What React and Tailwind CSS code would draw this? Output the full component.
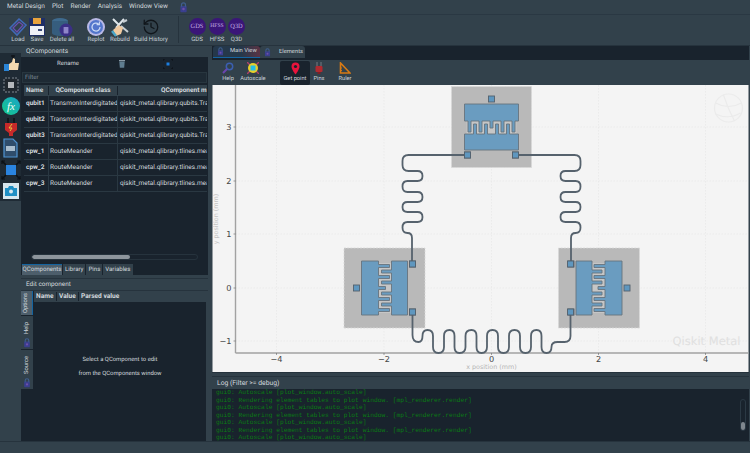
import React from "react";
import { History } from "lucide-react";

const uiFont = { fontFamily: 'Roboto,"Noto Sans",sans-serif' };

const Logo = ({ size = 14 }) => (
  <svg width={size} height={size} viewBox="0 0 14 14">
    <rect x="3" y="5" width="8" height="8" rx="1" fill="#3a3f8f" />
    <path d="M4.5 6V3.5a2.5 2.5 0 0 1 5 0V6" fill="none" stroke="#3f5f8f" strokeWidth="1.6" />
    <circle cx="7" cy="9" r="1.6" fill="#6f4fa8" />
  </svg>
);

const LoadIcon = () => (
  <svg width="20" height="20" viewBox="0 0 20 20">
    <path d="M2 11 L11 2 L18 8 L9 18 Z" fill="none" stroke="#4169b8" strokeWidth="1.6" />
    <path d="M5 11 L11 5 L15 8 L9 15 Z" fill="none" stroke="#6a4fb0" strokeWidth="1.2" />
  </svg>
);
const SaveIcon = () => (
  <svg width="18" height="20" viewBox="0 0 18 20">
    <rect x="1" y="1" width="16" height="18" fill="#1f2f66" />
    <rect x="5" y="1" width="8" height="6" fill="#e8a33c" />
    <rect x="2" y="9" width="14" height="9" fill="#eef1f6" />
    <rect x="10" y="12" width="4" height="2" fill="#3a4a7a" />
  </svg>
);
const DeleteIcon = () => (
  <svg width="22" height="20" viewBox="0 0 22 20">
    <ellipse cx="9" cy="4" rx="8" ry="3" fill="#3f6b8f" />
    <rect x="1" y="4" width="16" height="12" fill="#365d7e" />
    <ellipse cx="9" cy="16" rx="8" ry="3" fill="#365d7e" />
    <circle cx="15" cy="13" r="6.5" fill="#3b2f86" />
    <rect x="12.6" y="10" width="4.8" height="6.4" rx="0.6" fill="#8f86c9" />
  </svg>
);
const ReplotIcon = () => (
  <svg width="20" height="20" viewBox="0 0 20 20">
    <circle cx="10" cy="10" r="9" fill="#b9b9e6" />
    <circle cx="10" cy="10" r="7" fill="#5376cc" />
    <path d="M14 10a4 4 0 1 1-1.4-3" fill="none" stroke="#c9d8f4" strokeWidth="1.3" />
    <path d="M13.4 4.6V7.6H10.6" fill="none" stroke="#c9d8f4" strokeWidth="1.1" />
  </svg>
);
const RebuildIcon = () => (
  <svg width="20" height="20" viewBox="0 0 20 20">
    <path d="M3 2 L9 8 M14 2 L6 11" stroke="#dfe6ea" strokeWidth="2" />
    <path d="M11 9 L18 15 M13 5 L17 3" stroke="#c7ced3" strokeWidth="2" />
    <path d="M3 13 L9 8 L13 11 L11 17 L6 19 Z" fill="#efc9a0" />
    <path d="M2 14 L6 19" stroke="#4aa6c9" strokeWidth="2.4" />
  </svg>
);
const Disc = ({ t, s }) => (
  <div className={`w-[17px] h-[17px] rounded-full bg-[#3a1678] flex items-center justify-center text-[#c0aee2] whitespace-nowrap font-['Liberation_Serif',serif] ${s}`}>
    {t}
  </div>
);

const TB = ({ w, label, children }) => (
  <div className={`${w} flex flex-col items-center shrink-0`}>
    <div className="h-[21px] flex items-center justify-center">{children}</div>
    <div className="text-[6px] leading-[8px] -mt-[1px] whitespace-nowrap text-[#c9d2d8]">{label}</div>
  </div>
);

const SideThumb = () => (
  <svg width="18" height="17" viewBox="0 0 18 17">
    <path d="M11 0 L11 5 M9 1 L13 1" stroke="#11161b" strokeWidth="1.6" />
    <rect x="2" y="9" width="5" height="7" fill="#2a84d6" />
    <path d="M7 9 L10 7 L11 3 L13 4 L13 8 L17 8 L16 15 L7 15 Z" fill="#f4d9b0" />
  </svg>
);
const SideChip = () => (
  <svg width="18" height="18" viewBox="0 0 18 18">
    <path d="M4 1V17M7 1V17M11 1V17M14 1V17M1 4H17M1 7H17M1 11H17M1 14H17" stroke="#8a9299" strokeWidth="0.9" />
    <rect x="3" y="3" width="12" height="12" fill="#20282f" />
    <rect x="6" y="6" width="6" height="6" fill="#b4b8bc" />
  </svg>
);
const SideFx = () => (
  <svg width="18" height="18" viewBox="0 0 18 18">
    <defs>
      <linearGradient id="fxg" x1="0" y1="1" x2="1" y2="0">
        <stop offset="0" stopColor="#14c98a" />
        <stop offset="1" stopColor="#1aa3c9" />
      </linearGradient>
    </defs>
    <circle cx="9" cy="9" r="9" fill="url(#fxg)" />
    <text x="9" y="13" textAnchor="middle" fontSize="11" fontStyle="italic" fill="#fff" fontFamily="Liberation Serif, serif">fx</text>
  </svg>
);
const SidePlug = () => (
  <svg width="14" height="18" viewBox="0 0 14 18">
    <path d="M4 0V6M10 0V6" stroke="#11161b" strokeWidth="1.8" />
    <path d="M1 5H13V12L9 15V18H5V15L1 12Z" fill="#c62a2a" />
    <path d="M8 6L5 10H8L6 13" fill="none" stroke="#e8c23c" strokeWidth="1" />
  </svg>
);
const SideFile = () => (
  <svg width="15" height="20" viewBox="0 0 15 20">
    <path d="M1 1H10L14 5V19H1Z" fill="#2f4d6b" stroke="#4f93d1" strokeWidth="1.2" />
    <rect x="3" y="8" width="9" height="5" fill="#a9bdcd" />
  </svg>
);
const SideFull = () => (
  <svg width="20" height="20" viewBox="0 0 20 20">
    <rect x="5" y="5" width="10" height="10" fill="#2a84e0" />
    <path d="M1 1L5 5M19 1L15 5M1 19L5 15M19 19L15 15" stroke="#0c1116" strokeWidth="1.6" />
    <path d="M1 4V1H4M16 1H19V4M1 16V19H4M19 16V19H16" fill="none" stroke="#0c1116" strokeWidth="1.2" />
  </svg>
);
const SideCam = () => (
  <div className="w-[16px] h-[16px] bg-[#d6e6ee] flex items-center justify-center">
    <svg width="12" height="10" viewBox="0 0 12 10">
      <path d="M0 2H3L4 0H8L9 2H12V10H0Z" fill="#1f8fc4" />
      <circle cx="6" cy="5.5" r="2" fill="#d6e6ee" />
    </svg>
  </div>
);

const rows = [
  ["qubit1", "TransmonInterdigitated", "qiskit_metal.qlibrary.qubits.Transmon"],
  ["qubit2", "TransmonInterdigitated", "qiskit_metal.qlibrary.qubits.Transmon"],
  ["qubit3", "TransmonInterdigitated", "qiskit_metal.qlibrary.qubits.Transmon"],
  ["cpw_1", "RouteMeander", "qiskit_metal.qlibrary.tlines.meandered"],
  ["cpw_2", "RouteMeander", "qiskit_metal.qlibrary.tlines.meandered"],
  ["cpw_3", "RouteMeander", "qiskit_metal.qlibrary.tlines.meandered"],
];

const logLines = [
  "gui0: Autoscale [plot_window.auto_scale]",
  "gui0: Rendering element tables to plot window. [mpl_renderer.render]",
  "gui0: Autoscale [plot_window.auto_scale]",
  "gui0: Rendering element tables to plot window. [mpl_renderer.render]",
  "gui0: Autoscale [plot_window.auto_scale]",
  "gui0: Rendering element tables to plot window. [mpl_renderer.render]",
  "gui0: Autoscale [plot_window.auto_scale]",
];

function bottomMeander() {
  const tops = [428, 450, 472, 493, 515, 537];
  const bots = [439, 460, 482, 504, 526, 547];
  let d = "M413,315 V335 Q413,342 419,342 Q423,342 423,336 Q423,330 428,330";
  tops.forEach((t, i) => {
    const b = bots[i];
    const m = (t + b) / 2;
    d += ` Q${m},330 ${m},336 V347 Q${m},353 ${b},353`;
    const nt = tops[i + 1];
    if (nt) {
      const m2 = (b + nt) / 2;
      d += ` Q${m2},353 ${m2},347 V336 Q${m2},330 ${nt},330`;
    }
  });
  d += " Q552,353 552,347 Q552,342 558,342 H565 Q571,342 571,336 V315";
  return d;
}

const sideMeander =
  "M465,155 H409 Q403,155 403,161 V165 Q403,171 409,171 H418 Q423,171 423,176 Q423,181 418,181 H408 Q403,181 403,186.5 Q403,192 408,192 H418 Q423,192 423,197 Q423,202 418,202 H408 Q403,202 403,207 Q403,212 408,212 H418 Q423,212 423,217 Q423,222 418,222 H408 Q403,222 403,227.5 Q403,233 408,233 Q412.5,233 412.5,238 V261";

const Conn = ({ x, y }) => (
  <rect x={x - 3} y={y - 3} width="6" height="6" fill="#5f97bf" stroke="#53616d" strokeWidth="0.9" />
);

const Qubit = ({ transform }) => {
  const up = [-22, -11, 0, 11, 22];
  const down = [-16.5, -5.5, 5.5, 16.5];
  let d = "M-27,-23 H27 V-6 H23.5";
  up.slice().reverse().forEach((x, i) => {
    const depth = x === 0 ? 1 : 5;
    if (i > 0) d += ` H${x + 1.5}`;
    d += ` V${depth} H${x - 1.5} V-6`;
  });
  d += " H-27 Z";
  let e = "M-27,23 H27 V7 H20";
  down.slice().reverse().forEach((x) => {
    e += ` H${x + 1.5} V-3 H${x - 1.5} V7`;
  });
  e += " H-27 Z";
  return (
    <g transform={transform}>
      <rect x="-40" y="-40.5" width="80" height="81" fill="#b9b9b9" stroke="#d8d8d8" strokeWidth="0.8" strokeDasharray="2 1.2" />
      <rect x="-25" y="-7" width="50" height="15" fill="#c6c6c6" />
      <path d={d} fill="#6a9cc0" stroke="#68747e" strokeWidth="0.9" />
      <path d={e} fill="#6a9cc0" stroke="#68747e" strokeWidth="0.9" />
      <Conn x={0} y={-28} />
      <Conn x={-24} y={28} />
      <Conn x={24} y={28} />
    </g>
  );
};

const Chart = () => {
  const xt = [
    [277, "−4"],
    [384.5, "−2"],
    [492, "0"],
    [599, "2"],
    [706, "4"],
  ];
  const yt = [
    [127, "3"],
    [181, "2"],
    [234, "1"],
    [288, "0"],
    [341, "−1"],
  ];
  return (
    <svg className="block w-full h-full" viewBox="213 85 536 287" fontFamily="DejaVu Sans, sans-serif">
      <rect x="213" y="85" width="536" height="287" fill="#f4f4f4" />
      {xt.map(([x]) => (
        <line key={x} x1={x} x2={x} y1="85" y2="353" stroke="#e6e6e6" strokeWidth="0.7" strokeDasharray="1.5 1.5" />
      ))}
      {yt.map(([y]) => (
        <line key={y} x1="236" x2="749" y1={y} y2={y} stroke="#e6e6e6" strokeWidth="0.7" strokeDasharray="1.5 1.5" />
      ))}
      <g fill="none" stroke="#ebebeb" strokeWidth="1.2">
        <circle cx="729" cy="108" r="14" />
        <path d="M716,103 Q729,110 742,103 M716,114 Q729,120 741,113 M724,95 Q728,108 735,121" />
      </g>
      <text x="673" y="345" fontSize="11.5" fill="#e0e0e0">Qiskit Metal</text>
      <line x1="236" x2="236" y1="85" y2="353" stroke="#a2a2a2" strokeWidth="1.4" />
      <line x1="236" x2="749" y1="353" y2="353" stroke="#a2a2a2" strokeWidth="1.4" />
      {xt.map(([x, t]) => (
        <g key={x}>
          <line x1={x} x2={x} y1="353" y2="355" stroke="#666" strokeWidth="0.6" />
          <text x={x} y="361.5" fontSize="8.2" textAnchor="middle" fill="#444">{t}</text>
        </g>
      ))}
      {yt.map(([y, t]) => (
        <g key={y}>
          <line x1="234" x2="236" y1={y} y2={y} stroke="#666" strokeWidth="0.6" />
          <text x="232" y={y + 3} fontSize="8.2" textAnchor="end" fill="#444">{t}</text>
        </g>
      ))}
      <text x="492" y="369" fontSize="6.4" textAnchor="middle" fill="#b4b4b4">x position (mm)</text>
      <text transform="translate(218,219) rotate(-90)" fontSize="6.4" textAnchor="middle" fill="#c4c4c4">y position (mm)</text>
      <Qubit transform="translate(492,127)" />
      <Qubit transform="translate(385,288) rotate(-90)" />
      <Qubit transform="translate(599.5,288) rotate(90)" />
      <g fill="none" stroke="#56626d" strokeWidth="1.8">
        <path d={sideMeander} />
        <path d={sideMeander} transform="translate(984,0) scale(-1,1)" />
        <path d={bottomMeander()} />
      </g>
      <g>
        <Conn x={468} y={155} />
        <Conn x={516} y={155} />
        <Conn x={413} y={264} />
        <Conn x={413} y={312} />
        <Conn x={571} y={264} />
        <Conn x={571} y={312} />
      </g>
    </svg>
  );
};

const PlotBtn = ({ label, w, active, children }) => (
  <div className={`${w} h-[24px] rounded-[2px] flex flex-col items-center shrink-0 ${active ? "bg-[#19232d]" : ""}`}>
    <div className="h-[14px] flex items-center justify-center">{children}</div>
    <div className="text-[5.7px] leading-[9px] whitespace-nowrap text-[#c9d2d8]">{label}</div>
  </div>
);

export default function App() {
  return (
    <div style={uiFont} className="w-[750px] h-[453px] overflow-hidden flex flex-col bg-[#32414b] text-[#d4dade] [text-rendering:geometricPrecision]">
      {/* menu */}
      <div className="h-[15px] shrink-0 flex items-center pl-[7px] text-[6.5px] border-b border-[#2a3843] gap-[7px]">
        <span>Metal Design</span>
        <span>Plot</span>
        <span>Render</span>
        <span>Analysis</span>
        <span>Window View</span>
        <span className="ml-[3px]"><Logo size={11} /></span>
      </div>
      {/* toolbar */}
      <div className="h-[30px] shrink-0 flex items-start pt-[1px] pl-[8px]">
        <TB w="w-[20px]" label="Load"><LoadIcon /></TB>
        <TB w="w-[18px]" label="Save"><SaveIcon /></TB>
        <TB w="w-[32px]" label="Delete all"><DeleteIcon /></TB>
        <div className="w-[6px] shrink-0" />
        <TB w="w-[24px]" label="Replot"><ReplotIcon /></TB>
        <TB w="w-[24px]" label="Rebuild"><RebuildIcon /></TB>
        <TB w="w-[38px]" label="Build History"><History size={18} color="#11161b" strokeWidth={1.7} /></TB>
        <div className="w-[1px] h-[27px] bg-[#26333d] ml-[8px] mr-[8px] shrink-0" />
        <TB w="w-[20px]" label="GDS"><Disc t="GDS" s="text-[6.4px]" /></TB>
        <TB w="w-[20px]" label="HFSS"><Disc t="HFSS" s="text-[5.6px]" /></TB>
        <TB w="w-[19px]" label="Q3D"><Disc t="Q3D" s="text-[6.4px]" /></TB>
      </div>
      {/* main */}
      <div className="flex-1 min-h-0 flex border-t border-[#26333d]">
        {/* sidebar */}
        <div className="w-[21px] shrink-0 flex flex-col items-stretch pt-[7px]">
          <div className="bg-[#1f2b35] flex flex-col items-center">
            {[<SideThumb />, <SideChip />, <SideFx />, <SidePlug />, <SideFile />, <SideFull />, <SideCam />].map((ic, i) => (
              <div key={i} className="h-[21.2px] flex items-center justify-center">{ic}</div>
            ))}
          </div>
        </div>
        {/* left */}
        <div className="w-[187px] shrink-0 flex flex-col">
          <div className="h-[11px] shrink-0 flex items-center pl-[5px] text-[6.6px]">QComponents</div>
          <div className="h-[13px] shrink-0 bg-[#19232d] flex items-center text-[6px]">
            <span className="ml-[36px] w-[57px]">Rename</span>
            <svg width="8" height="9" viewBox="0 0 8 9" className="ml-[4px]">
              <rect x="1" y="1" width="6" height="1.2" fill="#8b9aa5" />
              <path d="M1.3 2.6H6.7L6.2 8.8H1.8Z" fill="#5f7d90" />
            </svg>
            <svg width="10" height="10" viewBox="0 0 10 10" className="ml-[37px]">
              <rect x="3.5" y="3.5" width="3" height="3" fill="#1c7ee0" />
              <path d="M0 2V0H2M8 0H10V2M0 8V10H2M10 8V10H8" fill="none" stroke="#0c1116" strokeWidth="1" />
            </svg>
          </div>
          <div className="h-[14px] shrink-0 bg-[#19232d] px-[1px] pt-[2px]">
            <div className="h-[11px] bg-[#1e2a34] border border-[#28363f] pl-[2px] text-[6px] leading-[9px] text-[#7d8a94]">Filter</div>
          </div>
          <div className="h-[169px] shrink-0 bg-[#19232d] pt-[1px] pl-[3px] pr-[1px] overflow-hidden">
            <div className="flex h-[11px] bg-[#32414b] text-[6.5px] font-bold items-center">
              <div className="w-[24px] pl-[2px]">Name</div>
              <div className="w-[69px] text-center border-l border-[#19232d] whitespace-nowrap">QComponent class</div>
              <div className="flex-1 min-w-0 border-l border-[#19232d] pl-[43px] whitespace-nowrap overflow-hidden">QComponent m</div>
            </div>
            {rows.map((r) => (
              <div key={r[0]} className="flex h-[16px] items-center text-[6.5px] border-b border-[#2a3842] whitespace-nowrap">
                <div className="w-[24px] h-full flex items-center pl-[2px] font-bold">{r[0]}</div>
                <div className="w-[69px] h-full flex items-center pl-[1px] border-l border-[#2a3842]">{r[1]}</div>
                <div className="flex-1 min-w-0 h-full flex items-center pl-[2px] border-l border-[#2a3842] overflow-hidden">{r[2]}</div>
              </div>
            ))}
          </div>
          <div className="h-[8px] shrink-0 bg-[#19232d] pl-[10px] pr-[10px] flex items-center">
            <div className="w-full h-[6px] rounded-[3px] border border-[#26333d] overflow-hidden">
              <div className="w-[98px] h-full bg-[#8d959c] rounded-[3px]" />
            </div>
          </div>
          <div className="h-[3px] shrink-0 bg-[#19232d]" />
          <div className="h-[11px] shrink-0 flex items-stretch gap-[1px] text-[6.1px] bg-[#19232d]">
            <div className="w-[40px] ml-[1px] bg-[#4d5e6b] border-t border-[#1464a0] flex items-center justify-center">QComponents</div>
            <div className="px-[2px] bg-[#32414b] flex items-center">Library</div>
            <div className="px-[2px] bg-[#32414b] flex items-center">Pins</div>
            <div className="px-[2px] bg-[#32414b] flex items-center">Variables</div>
          </div>
          <div className="h-[3px] shrink-0" />
          <div className="h-[13px] shrink-0 border-y border-[#26333d] flex items-center pl-[5px] text-[6.4px]">Edit component</div>
          <div className="flex-1 min-h-0 flex pr-[2px]">
            <div className="w-[13px] shrink-0 bg-[#19232d] flex flex-col items-stretch text-[5.8px] gap-[1px]">
              <div className="h-[24px] w-[12px] bg-[#4d5e6b] border-r border-[#1464a0] flex items-center justify-center">
                <span className="[writing-mode:vertical-rl] rotate-180">Options</span>
              </div>
              <div className="h-[33px] w-[12px] bg-[#32414b] flex flex-col items-center justify-end pb-[1px] gap-[4px]">
                <span className="[writing-mode:vertical-rl] rotate-180">Help</span>
                <Logo size={10} />
              </div>
              <div className="h-[39px] w-[12px] bg-[#32414b] flex flex-col items-center justify-end pb-[1px] gap-[4px]">
                <span className="[writing-mode:vertical-rl] rotate-180">Source</span>
                <Logo size={10} />
              </div>
            </div>
            <div className="flex-1 min-w-0 flex flex-col bg-[#19232d]">
              <div className="h-[11px] shrink-0 bg-[#32414b] flex items-center text-[6.6px] font-bold">
                <span className="w-[22px] pl-[2px]">Name</span>
                <span className="w-[22px] pl-[2px] border-l border-[#19232d]">Value</span>
                <span className="pl-[2px] border-l border-[#19232d]">Parsed value</span>
              </div>
              <div className="flex-1 flex flex-col items-center justify-center text-[5.9px] leading-[14px] pb-[10px]">
                <div>Select a QComponent to edit</div>
                <div>from the QComponents window</div>
              </div>
            </div>
          </div>
        </div>
        <div className="w-[4px] shrink-0" />
        {/* right */}
        <div className="flex-1 min-w-0 flex flex-col pr-[1px]">
          <div className="h-[14px] shrink-0 bg-[#19232d] flex items-start">
            <div className="ml-[1px] w-[47px] h-[12px] rounded-t-[3px] border-b border-[#1464a0] bg-[linear-gradient(90deg,#25384a_60%,#5a3344)] flex items-center pl-[3px] gap-[5px] text-[5.8px] whitespace-nowrap">
              <Logo size={9} />
              <span>Main View</span>
            </div>
            <div className="w-[45px] h-[12px] rounded-t-[3px] bg-[#32414b] flex items-center pl-[3px] gap-[7px] text-[5.8px]">
              <Logo size={9} />
              <span>Elements</span>
            </div>
          </div>
          <div className="h-[25px] shrink-0 bg-[#32414b] flex items-start pt-[1px] pl-[4px]">
            <PlotBtn w="w-[24px]" label="Help">
              <svg width="12" height="12" viewBox="0 0 12 12">
                <circle cx="7.5" cy="4.5" r="3.2" fill="none" stroke="#3b5fb0" strokeWidth="1.5" />
                <path d="M5 7L1 11" stroke="#6a45b0" strokeWidth="2" />
              </svg>
            </PlotBtn>
            <PlotBtn w="w-[26px]" label="Autoscale">
              <svg width="12" height="12" viewBox="0 0 12 12">
                <path d="M0 0L3 3M12 0L9 3M0 12L3 9M12 12L9 9" stroke="#b0406a" strokeWidth="1.4" />
                <circle cx="6" cy="6" r="5" fill="#e8d02a" />
                <rect x="3.5" y="3.5" width="5" height="5" fill="#23c0e8" />
              </svg>
            </PlotBtn>
            <div className="w-[14px] shrink-0" />
            <PlotBtn w="w-[30px]" label="Get point" active>
              <svg width="9" height="13" viewBox="0 0 9 13">
                <path d="M4.5 0.5A4 4 0 0 1 8.5 4.5C8.5 7.5 4.5 12.5 4.5 12.5S0.5 7.5 0.5 4.5A4 4 0 0 1 4.5 0.5Z" fill="#e8143c" />
                <circle cx="4.5" cy="4.5" r="1.6" fill="#19232d" />
              </svg>
            </PlotBtn>
            <PlotBtn w="w-[18px]" label="Pins">
              <svg width="8" height="12" viewBox="0 0 8 12">
                <path d="M2 0V4M6 0V4" stroke="#6b7078" strokeWidth="1.2" />
                <rect x="0.5" y="4" width="7" height="6" rx="1" fill="#b02a30" />
                <rect x="2.5" y="10" width="3" height="2" fill="#7a2226" />
              </svg>
            </PlotBtn>
            <div className="w-[3px] shrink-0" />
            <PlotBtn w="w-[28px]" label="Ruler">
              <svg width="12" height="12" viewBox="0 0 12 12">
                <path d="M1.5 1V11H11Z" fill="none" stroke="#d87a14" strokeWidth="1.6" />
                <path d="M1.5 6H3M1.5 8.5H3" stroke="#d87a14" strokeWidth="0.9" />
              </svg>
            </PlotBtn>
          </div>
          <div className="h-[287px] shrink-0">
            <Chart />
          </div>
          <div className="h-[5px] shrink-0 border-y border-[#26333d]" />
          <div className="h-[12px] shrink-0 flex items-center pl-[5px] pt-[1px] text-[6.8px]">Log (Filter &gt;= debug)</div>
          <div className="h-[52px] shrink-0 bg-[#19232d] relative overflow-hidden pl-[4px] font-['Liberation_Mono',monospace] text-[6.27px] leading-[7.5px] text-[#0a7d14] whitespace-pre">
            {logLines.map((l, i) => (
              <div key={i} className="h-[7.5px]">{l}</div>
            ))}
            <div className="absolute left-[528px] top-[10px] w-[6px] h-[32px] rounded-[3px] border border-[#2b3944]">
              <div className="absolute left-0 right-0 bottom-0 h-[8px] rounded-[2px] bg-[#7f878e]" />
            </div>
          </div>
        </div>
      </div>
      {/* status */}
      <div className="h-[12px] shrink-0 border-t border-[#26333d] bg-[#32414b]" />
    </div>
  );
}
